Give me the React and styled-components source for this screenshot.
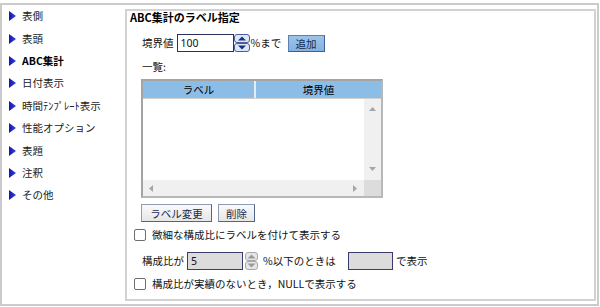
import React from 'react'
import styled, { createGlobalStyle } from 'styled-components'

const GlobalStyle = createGlobalStyle`
    body {
        margin: 0;
        background: #fff;
        font-family: "Noto Sans CJK JP", "Noto Sans", sans-serif;
        color: #111;
    }
`;

const navItems = [
    '表側',
    '表頭',
    'ABC集計',
    '日付表示',
    '時間ﾃﾝﾌﾟﾚｰﾄ表示',
    '性能オプション',
    '表題',
    '注釈',
    'その他',
]

function Arrow() {
    return (
        <svg width="7" height="10" viewBox="0 0 7 10">
            <defs>
                <linearGradient id="navArrow" x1="0" y1="0" x2="1" y2="0">
                    <stop offset="0" stopColor="#1414b0" />
                    <stop offset="1" stopColor="#3444e6" />
                </linearGradient>
            </defs>
            <polygon points="0,0 7,5 0,10" fill="url(#navArrow)" />
        </svg>
    )
}

function Spinner({ disabled, width, height }) {
    const border = disabled ? '#a8a8a8' : '#4a5c9c'
    const fill = disabled ? '#e6e6e6' : '#dce8f6'
    const arrow = disabled ? '#9a9a9a' : '#1c2f7f'
    const h = height / 2
    const cx = width / 2
    return (
        <svg width={width} height={height} viewBox={`0 0 ${width} ${height}`}>
            <rect x="0.5" y="0.5" width={width - 1} height={h - 1} rx="2.5" fill={fill} stroke={border} />
            <rect x="0.5" y={h + 0.5} width={width - 1} height={h - 1} rx="2.5" fill={fill} stroke={border} />
            <polygon points={`${cx - 4},${h - 2.5} ${cx + 4},${h - 2.5} ${cx},${2.5}`} fill={arrow} />
            <polygon points={`${cx - 4},${h + 2.5} ${cx + 4},${h + 2.5} ${cx},${height - 2.5}`} fill={arrow} />
        </svg>
    )
}

function ScrollArrow({ dir }) {
    const pts = {
        up: '0,4 7,4 3.5,0',
        down: '0,0 7,0 3.5,4',
        left: '4,0 4,7 0,3.5',
        right: '0,0 0,7 4,3.5',
    }[dir]
    const vertical = dir === 'up' || dir === 'down'
    return (
        <svg width={vertical ? 7 : 4} height={vertical ? 4 : 7}>
            <polygon points={pts} fill="#a6a6a6" />
        </svg>
    )
}

export default function App() {
    return (
        <>
            <GlobalStyle />
            <Frame>
                <Nav>
                    {navItems.map((item) => (
                        <NavItem key={item} $active={item === 'ABC集計'}>
                            <Arrow />
                            <NavText>{item}</NavText>
                        </NavItem>
                    ))}
                </Nav>
                <Panel>
                    <Title>ABC集計のラベル指定</Title>
                    <Body>
                        <Row $top={10}>
                            <Label>境界値</Label>
                            <Field $width={57} value="100" readOnly />
                            <Spinner width={16} height={18} />
                            <Unit $width={37}>%まで</Unit>
                            <AddButton>追加</AddButton>
                        </Row>
                        <ListLabel>一覧:</ListLabel>
                        <Table>
                            <Header>
                                <HeadCell $width={111}>ラベル</HeadCell>
                                <HeadDivider />
                                <HeadCell $width={125}>境界値</HeadCell>
                            </Header>
                            <TableBody>
                                <Rows />
                                <VScroll>
                                    <ScrollArrow dir="up" />
                                    <ScrollArrow dir="down" />
                                </VScroll>
                            </TableBody>
                            <HScrollRow>
                                <HScroll>
                                    <ScrollArrow dir="left" />
                                    <ScrollArrow dir="right" />
                                </HScroll>
                                <Corner />
                            </HScrollRow>
                        </Table>
                        <Buttons>
                            <Button $width={71}>ラベル変更</Button>
                            <Button $width={37}>削除</Button>
                        </Buttons>
                        <CheckRow $top={7}>
                            <Box />
                            <span>微細な構成比にラベルを付けて表示する</span>
                        </CheckRow>
                        <Row $top={11}>
                            <Label>構成比が</Label>
                            <Field $width={56} $disabled value="5" readOnly />
                            <SpinWrap>
                                <Spinner disabled width={13} height={18} />
                            </SpinWrap>
                            <Unit $width={85} $gap={5}>%以下のときは</Unit>
                            <Field $width={45} $disabled value="" readOnly />
                            <Unit $gap={3}>で表示</Unit>
                        </Row>
                        <CheckRow $top={8}>
                            <Box />
                            <span>構成比が実績のないとき，NULLで表示する</span>
                        </CheckRow>
                    </Body>
                </Panel>
            </Frame>
        </>
    )
}

const Frame = styled.div`
    margin-top: 3px;
    width: 599px;
    height: 303px;
    box-sizing: border-box;
    border: 2px solid #cbcbcb;
    display: flex;
`;
const Nav = styled.div`
    width: 123px;
    flex-shrink: 0;
`;
const NavItem = styled.div`
    height: 22.4px;
    display: flex;
    align-items: center;
    padding-left: 7px;
    gap: 6px;
    font-size: 10.5px;
    font-weight: ${(p) => (p.$active ? 700 : 400)};
    color: ${(p) => (p.$active ? '#000' : '#222')};
`;
const NavText = styled.span`
    white-space: nowrap;
    line-height: 14px;
`;
const Panel = styled.div`
    flex: 1;
    margin: 4px 1px 3px 0;
    border: 2px solid #d2d2d2;
    display: flex;
    flex-direction: column;
`;
const Title = styled.div`
    margin-left: 3px;
    font-size: 11px;
    font-weight: 700;
    line-height: 13px;
    color: #000;
`;
const Body = styled.div`
    padding-left: 15px;
    font-size: 10.5px;
    display: flex;
    flex-direction: column;
    align-items: flex-start;
`;
const Row = styled.div`
    margin-top: ${(p) => p.$top}px;
    height: 18px;
    display: flex;
    align-items: center;
    white-space: nowrap;
`;
const Label = styled.span`
    margin-right: 3px;
    line-height: 14px;
`;
const Field = styled.input`
    width: ${(p) => p.$width}px;
    height: 18px;
    box-sizing: border-box;
    border: 1px solid ${(p) => (p.$disabled ? '#3c3c6a' : '#2e2e5e')};
    background: ${(p) => (p.$disabled ? '#dcdcdc' : '#fff')};
    font-family: "Noto Sans", sans-serif;
    font-size: 10.5px;
    color: #111;
    padding: 0 0 0 3px;
    margin: 0;
    outline: none;
`;
const SpinWrap = styled.div`
    margin-left: 2px;
    display: flex;
`;
const Unit = styled.span`
    width: ${(p) => (p.$width ? `${p.$width}px` : 'auto')};
    margin-left: ${(p) => p.$gap ?? 1}px;
    line-height: 14px;
`;
const AddButton = styled.div`
    width: 37px;
    height: 17px;
    box-sizing: border-box;
    border: 1px solid #5d80b2;
    border-right-color: #3e5f90;
    border-bottom-color: #3e5f90;
    background: linear-gradient(#9cc4ea, #84b2df);
    color: #17284a;
    display: flex;
    align-items: center;
    justify-content: center;
    font-size: 10.5px;
`;
const ListLabel = styled.div`
    margin-top: 8px;
    line-height: 14px;
`;
const Table = styled.div`
    margin-top: 5px;
    margin-left: -1px;
    width: 242px;
    height: 119px;
    box-sizing: border-box;
    border: 2px solid #a4a4a4;
    border-right-color: #b8b8b8;
    border-bottom-color: #b8b8b8;
    display: flex;
    flex-direction: column;
    background: #fff;
`;
const Header = styled.div`
    height: 17px;
    display: flex;
    background: #8cbde6;
    border-bottom: 1px solid #d0d0d0;
`;
const HeadCell = styled.div`
    width: ${(p) => p.$width}px;
    display: flex;
    align-items: center;
    justify-content: center;
    color: #000;
    font-size: 10.5px;
`;
const HeadDivider = styled.div`
    width: 2px;
    background: #e4edf6;
`;
const TableBody = styled.div`
    flex: 1;
    display: flex;
`;
const Rows = styled.div`
    flex: 1;
`;
const VScroll = styled.div`
    width: 17px;
    background: #f0f0f0;
    display: flex;
    flex-direction: column;
    align-items: center;
    justify-content: space-between;
    padding: 8px 0 9px;
    box-sizing: border-box;
`;
const HScrollRow = styled.div`
    height: 16px;
    display: flex;
`;
const HScroll = styled.div`
    flex: 1;
    background: #f0f0f0;
    display: flex;
    align-items: center;
    justify-content: space-between;
    padding: 0 7px 0 6px;
`;
const Corner = styled.div`
    width: 17px;
    background: #dcdcdc;
`;
const Buttons = styled.div`
    margin-top: 6px;
    margin-left: -1px;
    display: flex;
    gap: 6px;
`;
const Button = styled.div`
    width: ${(p) => p.$width}px;
    height: 18px;
    box-sizing: border-box;
    border: 1px solid #8d9cb4;
    border-right-color: #52668a;
    border-bottom-color: #52668a;
    background: linear-gradient(#fafafa, #e6e6e6);
    color: #1a2a4a;
    display: flex;
    align-items: center;
    justify-content: center;
    font-size: 10.5px;
`;
const CheckRow = styled.div`
    margin-top: ${(p) => p.$top}px;
    margin-left: -8px;
    height: 12px;
    display: flex;
    align-items: center;
    gap: 6px;
    white-space: nowrap;
    line-height: 14px;
`;
const Box = styled.div`
    width: 12px;
    height: 12px;
    box-sizing: border-box;
    border: 1px solid #6e6e6e;
    border-radius: 2px;
    background: #fff;
`;
